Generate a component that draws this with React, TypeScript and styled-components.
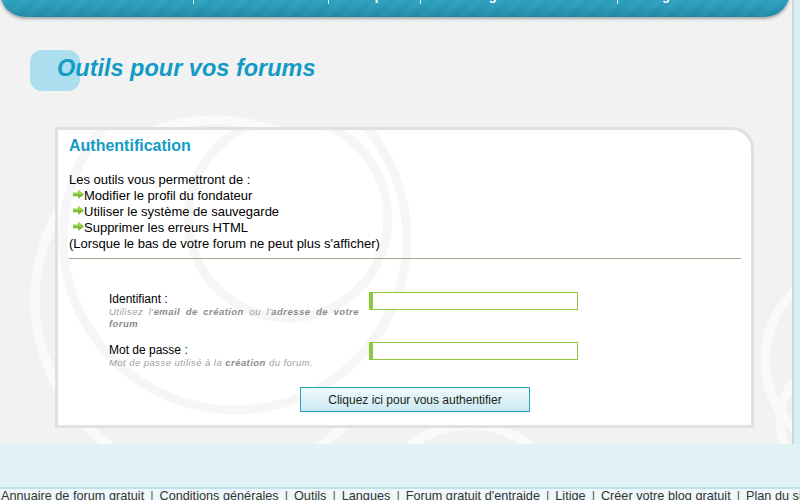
import React from "react";
import styled, { createGlobalStyle } from "styled-components";

const GlobalStyle = createGlobalStyle`
  html, body { margin: 0; padding: 0; }
  body {
    background: #f2f2f2;
    font-family: "Liberation Sans", Arial, sans-serif;
    overflow: hidden;
  }
`;

const Page = styled.div`
  width: 800px;
  height: 500px;
  overflow: hidden;
  display: flex;
  flex-direction: column;
`;

const Top = styled.div`
  display: flex;
  height: 444px;
  flex: none;
`;

const Main = styled.div`
  position: relative;
  width: 792px;
  flex: none;
  background: #f2f2f2;
  overflow: hidden;
`;

const SideStrip = styled.div`
  flex: 1;
  border-left: 2px solid #d4d4d4;
  background: #dbf0f6;
`;

const BgSwirl = styled.svg`
  position: absolute;
  left: 0;
  top: 0;
  pointer-events: none;
`;

const NavBar = styled.nav`
  position: relative;
  z-index: 1;
  display: flex;
  height: 37px;
  width: 790px;
  margin-top: -20px;
  border-radius: 0 0 25px 25px;
  background:
    repeating-linear-gradient(135deg, rgba(255,255,255,0.035) 0 7px, rgba(255,255,255,0) 7px 14px),
    linear-gradient(#39abc8, #2a9dbb 65%, #1f88a4);
  box-shadow: 0 2px 3px rgba(0, 0, 0, 0.3);
  overflow: hidden;
`;

const NavItem = styled.span<{ $w: number; $pad: number; $sep: boolean }>`
  flex: none;
  width: ${(p) => p.$w}px;
  height: 24px;
  box-sizing: border-box;
  padding: 9px 0 0 ${(p) => p.$pad}px;
  border-left: ${(p) => (p.$sep ? "1px solid rgba(255,255,255,0.85)" : "none")};
  color: #fff;
  font: bold 13px/13px "Liberation Sans", Arial, sans-serif;
  white-space: nowrap;
  overflow: hidden;
`;

const TitleRow = styled.div`
  position: relative;
  z-index: 1;
  margin-top: 33px;
  height: 41px;
  padding-left: 57px;
  &::before {
    content: "";
    position: absolute;
    left: 30px;
    top: 0;
    width: 50px;
    height: 41px;
    border-radius: 12px;
    background: #abdeef;
  }
`;

const Title = styled.h1`
  position: relative;
  margin: 0;
  font: italic bold 23.5px/37px "Liberation Sans", Arial, sans-serif;
  color: #139bc6;
`;

const Card = styled.section`
  position: relative;
  z-index: 1;
  margin: 36px 0 0 55px;
  width: 699px;
  height: 301px;
  box-sizing: border-box;
  border: 3px solid #e0e0e0;
  border-top-right-radius: 22px;
  background: #fff;
  padding: 6px 10px 0 11px;
  overflow: hidden;
`;

const CardSwirl = styled.svg`
  position: absolute;
  left: 0;
  top: 0;
  pointer-events: none;
`;

const CardBody = styled.div`
  position: relative;
`;

const CardTitle = styled.h2`
  margin: 0;
  font: bold 16px/20px "Liberation Sans", Arial, sans-serif;
  color: #139bc6;
`;

const Intro = styled.div`
  margin-top: 16px;
  font: 13px/16px "Liberation Sans", Arial, sans-serif;
  color: #000;
`;

const Bullet = styled.div`
  display: flex;
  align-items: center;
  padding-left: 4px;
`;

const ArrowIcon = styled.svg`
  flex: none;
  width: 11px;
  height: 9px;
  margin-top: -3px;
`;

const Divider = styled.div`
  margin-top: 6px;
  border-top: 1px solid #a5a48e;
`;

const Form = styled.div`
  margin-top: 33px;
  padding-left: 40px;
  display: flex;
  flex-direction: column;
  gap: 12px;
`;

const FormRow = styled.div`
  display: grid;
  grid-template-columns: 250px 209px;
  column-gap: 10px;
  align-items: start;
`;

const LabelCol = styled.div<{ $shift: number }>`
  margin-top: ${(p) => p.$shift}px;
`;

const Label = styled.label`
  display: block;
  font: 12px/14px "Liberation Sans", Arial, sans-serif;
  color: #000;
`;

const Help = styled.div`
  font: italic 9.5px/12px "Liberation Sans", Arial, sans-serif;
  letter-spacing: 0.45px;
  color: #a0a0a0;
  text-align: justify;
  & b {
    color: #8c8c8c;
  }
`;

const Field = styled.input`
  display: block;
  width: 209px;
  height: 18px;
  box-sizing: border-box;
  margin: 0;
  padding: 0 4px;
  border: 1px solid #8dc63f;
  border-left-width: 4px;
  background: #fff;
  outline: none;
`;

const ButtonRow = styled.div`
  margin-top: 18px;
  padding-left: 231px;
`;

const Submit = styled.button`
  width: 230px;
  height: 25px;
  box-sizing: border-box;
  margin: 0;
  padding: 0;
  border: 1px solid #2b9fb8;
  background: linear-gradient(#f0fafc, #cbe9f2);
  font: 12px/14px "Liberation Sans", Arial, sans-serif;
  color: #222;
  cursor: pointer;
`;

const Band = styled.div`
  height: 43px;
  flex: none;
  background: #e2f3f8;
  border-bottom: 2px solid #bce3ee;
`;

const Footer = styled.div`
  flex: 1;
  background: #eef8fb;
  padding-left: 1px;
  font: 12.7px/14px "Liberation Sans", Arial, sans-serif;
  color: #333;
  white-space: nowrap;
  overflow: hidden;
`;

const FooterSep = styled.span`
  margin: 0 6px;
  color: #555;
`;

const navItems = [
  { w: 193, pad: 60, label: "Accueil", sep: false },
  { w: 135, pad: 20, label: "Créer un forum", sep: true },
  { w: 92, pad: 11, label: "Exemples", sep: true },
  { w: 197, pad: 31, label: "Hébergement", sep: true },
  { w: 173, pad: 23, label: "Blog", sep: true },
];

const bullets = [
  "Modifier le profil du fondateur",
  "Utiliser le système de sauvegarde",
  "Supprimer les erreurs HTML",
];

const footerLinks = [
  "Annuaire de forum gratuit",
  "Conditions générales",
  "Outils",
  "Langues",
  "Forum gratuit d'entraide",
  "Litige",
  "Créer votre blog gratuit",
  "Plan du site",
];

const Arrow = () => (
  <ArrowIcon viewBox="0 0 11 9">
    <path d="M0 2.8h5.2V0L11 4.5 5.2 9V6.2H0z" fill="#79b92c" />
    <path d="M0 2.8h5.2V0L11 4.5H0z" fill="#9bd14f" />
  </ArrowIcon>
);

export default function App() {
  return (
    <>
      <GlobalStyle />
      <Page>
        <Top>
          <Main>
            <BgSwirl width="792" height="444" viewBox="0 0 792 444">
              <g fill="none" stroke="#fafafa" strokeWidth="9">
                <circle cx="215" cy="300" r="180" />
                <circle cx="470" cy="520" r="95" />
                <circle cx="860" cy="360" r="95" />
                <circle cx="840" cy="420" r="60" />
              </g>
            </BgSwirl>
            <NavBar>
              {navItems.map((n) => (
                <NavItem key={n.label} $w={n.w} $pad={n.pad} $sep={n.sep}>
                  {n.label}
                </NavItem>
              ))}
            </NavBar>
            <TitleRow>
              <Title>Outils pour vos forums</Title>
            </TitleRow>
            <Card>
              <CardSwirl width="693" height="295" viewBox="0 0 693 295">
                <g fill="none" stroke="#f6f6f6" strokeWidth="9">
                  <circle cx="177" cy="108" r="172" />
                  <circle cx="230" cy="88" r="100" />
                </g>
              </CardSwirl>
              <CardBody>
                <CardTitle>Authentification</CardTitle>
                <Intro>
                  <div>Les outils vous permettront de :</div>
                  {bullets.map((b) => (
                    <Bullet key={b}>
                      <Arrow />
                      <span>{b}</span>
                    </Bullet>
                  ))}
                  <div>(Lorsque le bas de votre forum ne peut plus s'afficher)</div>
                </Intro>
                <Divider />
                <Form>
                  <FormRow>
                    <LabelCol $shift={0}>
                      <Label>Identifiant :</Label>
                      <Help>
                        Utilisez l'<b>email de création</b> ou l'<b>adresse de votre forum</b>
                      </Help>
                    </LabelCol>
                    <Field type="text" />
                  </FormRow>
                  <FormRow>
                    <LabelCol $shift={1}>
                      <Label>Mot de passe :</Label>
                      <Help>
                        Mot de passe utilisé à la <b>création</b> du forum.
                      </Help>
                    </LabelCol>
                    <Field type="password" />
                  </FormRow>
                </Form>
                <ButtonRow>
                  <Submit type="button">Cliquez ici pour vous authentifier</Submit>
                </ButtonRow>
              </CardBody>
            </Card>
          </Main>
          <SideStrip />
        </Top>
        <Band />
        <Footer>
          {footerLinks.map((f, i) => (
            <React.Fragment key={f}>
              {i > 0 && <FooterSep>|</FooterSep>}
              <span>{f}</span>
            </React.Fragment>
          ))}
        </Footer>
      </Page>
    </>
  );
}
